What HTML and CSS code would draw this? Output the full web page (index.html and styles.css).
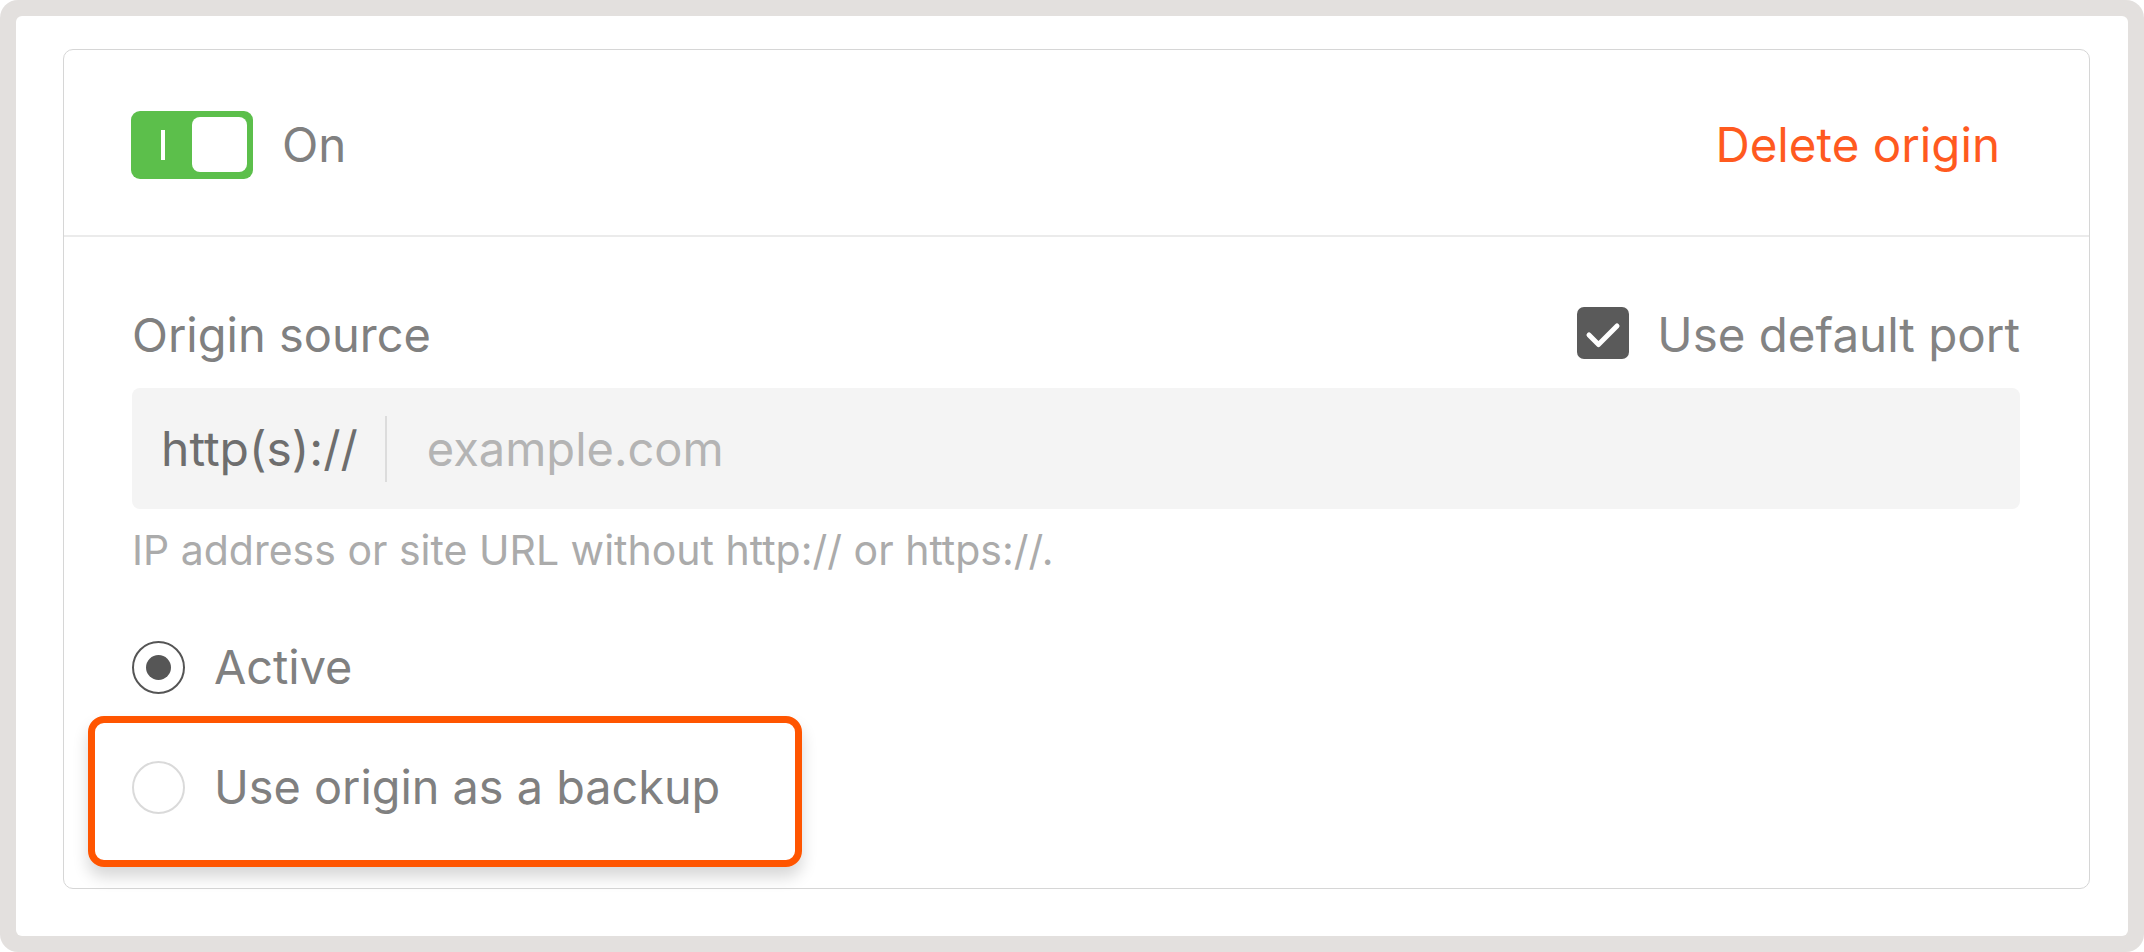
FILE: index.html
```html
<!DOCTYPE html>
<html lang="en">
<head>
<meta charset="utf-8">
<title>Origin settings</title>
<link rel="stylesheet" href="styles.css">
</head>
<body>
<div class="frame">
  <div class="panel">
    <section class="card">
      <header class="card-header">
        <div class="switch-group">
          <span class="switch">
            <span class="switch-mark"></span>
            <span class="switch-knob"></span>
          </span>
          <span class="switch-label">On</span>
        </div>
        <button class="delete-btn" type="button">Delete origin</button>
      </header>
      <div class="card-body">
        <div class="field-head">
          <label class="field-label">Origin source</label>
          <label class="check">
            <span class="check-box">
              <svg width="52" height="52" viewBox="0 0 52 52"><path d="M12 28 L21.5 37.5 L40 19" fill="none" stroke="#fff" stroke-width="5" stroke-linecap="round" stroke-linejoin="round"/></svg>
            </span>
            <span class="check-label">Use default port</span>
          </label>
        </div>
        <div class="input">
          <span class="input-prefix">http(s)://</span>
          <span class="input-sep"></span>
          <span class="input-placeholder">example.com</span>
        </div>
        <p class="hint">IP address or site URL without http:// or https://.</p>
        <div class="radios">
          <label class="radio">
            <span class="radio-circle radio-circle--on"><span class="radio-dot"></span></span>
            <span class="radio-label">Active</span>
          </label>
          <label class="radio radio--highlight">
            <span class="radio-circle"></span>
            <span class="radio-label">Use origin as a backup</span>
            <span class="highlight"></span>
          </label>
        </div>
      </div>
    </section>
  </div>
</div>
</body>
</html>
```

FILE: styles.css
```css
* { box-sizing: border-box; }

html, body {
  margin: 0;
  padding: 0;
  background: #ffffff;
}

body {
  font-family: "Inter", "Noto Sans", "Liberation Sans", sans-serif;
  color: #808080;
}

.frame {
  width: 2144px;
  height: 952px;
  background: #e3e0de;
  border-radius: 18px;
  padding: 16px;
}

.panel {
  height: 100%;
  background: #ffffff;
  border-radius: 6px;
  padding: 33px 38px 0 47px;
}

.card {
  border: 1px solid #d6d6d6;
  border-radius: 10px;
  background: #fff;
}

.card-header {
  height: 187px;
  padding: 4px 70px 0 67px;
  border-bottom: 2px solid #ebebeb;
  display: flex;
  align-items: center;
  justify-content: space-between;
}

.switch-group {
  display: flex;
  align-items: center;
  gap: 29px;
}

.switch {
  width: 122px;
  height: 68px;
  background: #5cbf4b;
  border-radius: 9px;
  padding: 6px;
  display: flex;
  align-items: center;
  justify-content: space-between;
}

.switch-mark {
  width: 4px;
  height: 30px;
  background: #fff;
  margin-left: 24px;
}

.switch-knob {
  width: 55px;
  height: 55px;
  background: #fff;
  border-radius: 8px;
}

.switch-label {
  font-size: 47.5px;
  line-height: 58px;
  color: #808080;
}

.delete-btn {
  font-family: inherit;
  font-size: 47.5px;
  line-height: 58px;
  color: #ff5a1f;
  background: none;
  border: 0;
  padding: 0 19px 0 20px;
  cursor: pointer;
}

.card-body {
  padding: 69px 69px 74px 68px;
}

.field-head {
  height: 54px;
  display: flex;
  align-items: center;
  justify-content: space-between;
}

.field-label {
  font-size: 47px;
  line-height: 58px;
  color: #808080;
  margin-top: 4px;
}

.check {
  display: flex;
  align-items: center;
  gap: 28px;
}

.check-box {
  width: 52px;
  height: 52px;
  border-radius: 7px;
  background: #5a5a5a;
  display: block;
}

.check-box svg { display: block; }

.check-label {
  font-size: 47.5px;
  line-height: 58px;
  color: #838383;
  margin-top: 3px;
}

.input {
  margin-top: 28px;
  height: 121px;
  background: #f4f4f4;
  border-radius: 8px;
  padding-left: 29px;
  display: flex;
  align-items: center;
}

.input-prefix {
  font-size: 48px;
  line-height: 58px;
  color: #6e6e6e;
}

.input-sep {
  width: 2px;
  height: 66px;
  background: #dcdcdc;
  margin: 0 40px 0 27px;
}

.input-placeholder {
  font-size: 47px;
  line-height: 58px;
  color: #b4b4b4;
}

.hint {
  margin: 17px 0 0;
  font-size: 41px;
  line-height: 48px;
  color: #ababab;
}

.radios {
  margin-top: 66px;
  display: flex;
  flex-direction: column;
  gap: 66px;
}

.radio {
  height: 54px;
  display: flex;
  align-items: center;
  gap: 29px;
  position: relative;
}

.radio-circle {
  width: 53px;
  height: 53px;
  border-radius: 50%;
  border: 2px solid #dadada;
  display: flex;
  align-items: center;
  justify-content: center;
  background: #fff;
}

.radio-circle--on {
  border-color: #555555;
}

.radio-dot {
  width: 25px;
  height: 25px;
  border-radius: 50%;
  background: #565656;
}

.radio-label {
  font-size: 46.8px;
  line-height: 58px;
  color: #808080;
}

.highlight {
  position: absolute;
  left: -44px;
  top: -44px;
  width: 714px;
  height: 151px;
  border: 7px solid #ff5500;
  border-radius: 16px;
  box-shadow: 0 10px 16px rgba(0, 0, 0, 0.16);
  pointer-events: none;
}
```
